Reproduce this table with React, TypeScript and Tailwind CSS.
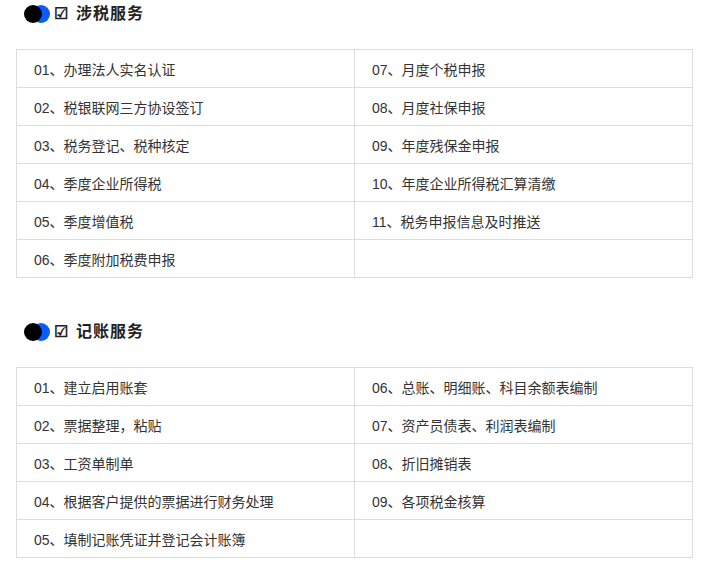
const taxItems = [
  "01、办理法人实名认证",
  "07、月度个税申报",
  "02、税银联网三方协设签订",
  "08、月度社保申报",
  "03、税务登记、税种核定",
  "09、年度残保金申报",
  "04、季度企业所得税",
  "10、年度企业所得税汇算清缴",
  "05、季度增值税",
  "11、税务申报信息及时推送",
  "06、季度附加税费申报",
  "",
];

const bookItems = [
  "01、建立启用账套",
  "06、总账、明细账、科目余额表编制",
  "02、票据整理，粘贴",
  "07、资产员债表、利润表编制",
  "03、工资单制单",
  "08、折旧摊销表",
  "04、根据客户提供的票据进行财务处理",
  "09、各项税金核算",
  "05、填制记账凭证并登记会计账簿",
  "",
];

const SectionTitle = ({ title }: { title: string }) => (
  <div className="flex h-[18px] items-center pl-6">
    <div className="relative h-[18px] w-[26px]">
      <span className="absolute left-[8px] top-0 h-[18px] w-[18px] rounded-full bg-[#0a5cff]" />
      <span className="absolute left-0 top-0 h-[18px] w-[18px] rounded-full bg-black" />
    </div>
    <span className="ml-[4px] text-[16px] font-bold leading-none text-[#222]">☑</span>
    <span className="ml-[8px] text-[16px] font-bold leading-none tracking-[1px] text-[#222]">{title}</span>
  </div>
);

const ServiceTable = ({ items }: { items: string[] }) => (
  <div className="mx-4 grid w-[677px] grid-cols-2 border-l border-t border-[#dcdcdc]">
    {items.map((item, i) => (
      <div
        key={i}
        className="flex h-[38px] items-center border-b border-r border-[#dcdcdc] pl-[17px] pt-[3px] text-[14px] text-[#333]"
      >
        {item}
      </div>
    ))}
  </div>
);

const App = () => {
  return (
    <div
      className="h-[586px] w-[708px] bg-white pt-[5px]"
      style={{ fontFamily: '"Liberation Sans", "Noto Sans CJK SC", sans-serif' }}
    >
      <SectionTitle title="涉税服务" />
      <div className="mt-[26px]">
        <ServiceTable items={taxItems} />
      </div>
      <div className="mt-[45px]">
        <SectionTitle title="记账服务" />
      </div>
      <div className="mt-[26px]">
        <ServiceTable items={bookItems} />
      </div>
    </div>
  );
};

export default App;
